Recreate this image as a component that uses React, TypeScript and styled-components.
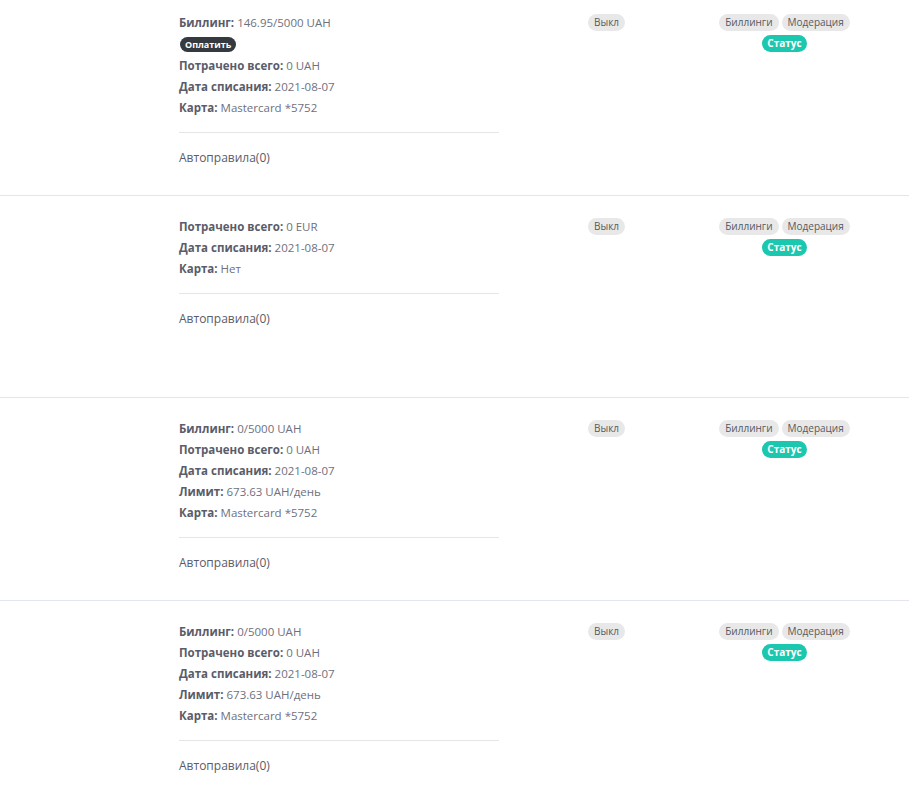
import React from "react";
import styled, { createGlobalStyle } from "styled-components";

const GlobalStyle = createGlobalStyle`
  html, body {
    margin: 0;
    padding: 0;
    background: #ffffff;
    font-family: "Open Sans", "Noto Sans", sans-serif;
    font-size: 11.5px;
    color: #6e707e;
  }
`;

const List = styled.div`
  margin-top: -8px;
`;

const Row = styled.div`
  display: grid;
  grid-template-columns: 409px 117px 159px;
  padding: 20px 0 27px 179px;
  min-height: 202px;
  box-sizing: border-box;
  border-bottom: 1px solid #e3e6f0;
`;

const Info = styled.div`
  display: flex;
  flex-direction: column;
`;

const Line = styled.div`
  height: 21px;
  line-height: 21px;
  white-space: nowrap;
  color: #6e707e;
`;

const Label = styled.b`
  font-weight: 700;
  color: #5a5c69;
`;

const PayLine = styled.div`
  height: 22px;
  display: flex;
  align-items: center;
`;

const PayButton = styled.span`
  display: inline-block;
  background: #343a40;
  color: #ffffff;
  font-size: 9px;
  font-weight: 700;
  line-height: 15px;
  padding: 0 5px;
  border-radius: 8px;
  margin-left: 1px;
`;

const Divider = styled.div`
  width: 320px;
  height: 1px;
  background: #e6e6e6;
  margin: 14px 0;
`;

const Rules = styled.div`
  height: 21px;
  line-height: 21px;
  font-size: 12px;
  color: #5a5c69;
`;

const StatusCol = styled.div`
  padding-top: 2px;
`;

const Pill = styled.span<{ $teal?: boolean }>`
  display: inline-block;
  font-size: 10px;
  line-height: 17px;
  padding: 0 ${({ $teal }) => ($teal ? 5 : 6)}px;
  border-radius: 9px;
  background: ${({ $teal }) => ($teal ? "#1cc7b0" : "#e8e8e8")};
  color: ${({ $teal }) => ($teal ? "#ffffff" : "#555a60")};
  font-weight: ${({ $teal }) => ($teal ? 700 : 400)};
`;

const TagsCol = styled.div`
  display: flex;
  flex-wrap: wrap;
  justify-content: center;
  align-content: flex-start;
  gap: 4px 3px;
  padding-top: 2px;
`;

type Item = { label: string; value: string };

type Account = {
  billing?: string;
  pay?: boolean;
  items: Item[];
};

const accounts: Account[] = [
  {
    billing: "146.95/5000 UAH",
    pay: true,
    items: [
      { label: "Потрачено всего:", value: "0 UAH" },
      { label: "Дата списания:", value: "2021-08-07" },
      { label: "Карта:", value: "Mastercard *5752" },
    ],
  },
  {
    items: [
      { label: "Потрачено всего:", value: "0 EUR" },
      { label: "Дата списания:", value: "2021-08-07" },
      { label: "Карта:", value: "Нет" },
    ],
  },
  {
    billing: "0/5000 UAH",
    items: [
      { label: "Потрачено всего:", value: "0 UAH" },
      { label: "Дата списания:", value: "2021-08-07" },
      { label: "Лимит:", value: "673.63 UAH/день" },
      { label: "Карта:", value: "Mastercard *5752" },
    ],
  },
  {
    billing: "0/5000 UAH",
    items: [
      { label: "Потрачено всего:", value: "0 UAH" },
      { label: "Дата списания:", value: "2021-08-07" },
      { label: "Лимит:", value: "673.63 UAH/день" },
      { label: "Карта:", value: "Mastercard *5752" },
    ],
  },
];

function AccountRow({ account }: { account: Account }) {
  return (
    <Row>
      <Info>
        {account.billing && (
          <Line>
            <Label>Биллинг:</Label> {account.billing}
          </Line>
        )}
        {account.pay && (
          <PayLine>
            <PayButton>Оплатить</PayButton>
          </PayLine>
        )}
        {account.items.map((it) => (
          <Line key={it.label}>
            <Label>{it.label}</Label> {it.value}
          </Line>
        ))}
        <Divider />
        <Rules>Автоправила(0)</Rules>
      </Info>
      <StatusCol>
        <Pill>Выкл</Pill>
      </StatusCol>
      <TagsCol>
        <Pill>Биллинги</Pill>
        <Pill>Модерация</Pill>
        <Pill $teal>Статус</Pill>
      </TagsCol>
    </Row>
  );
}

export default function App() {
  return (
    <>
      <GlobalStyle />
      <List>
        {accounts.map((a, i) => (
          <AccountRow key={i} account={a} />
        ))}
      </List>
    </>
  );
}
